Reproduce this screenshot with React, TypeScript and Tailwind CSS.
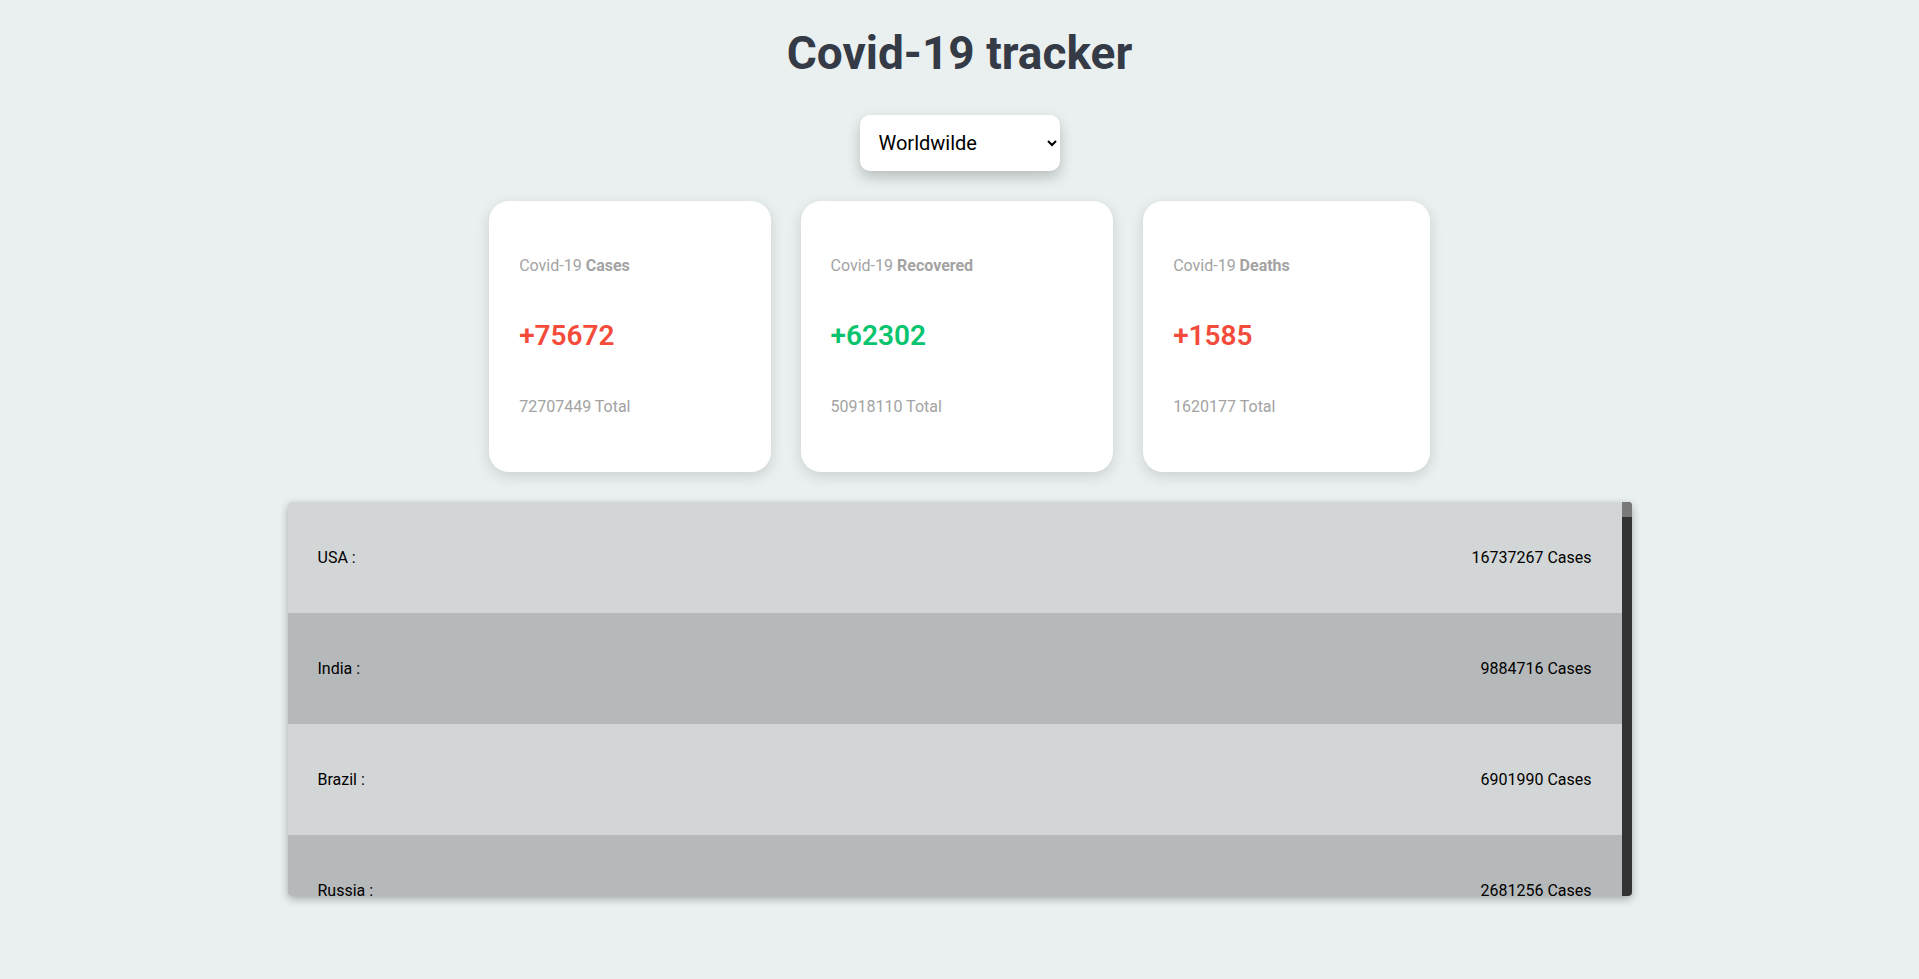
import React from 'react';

const raw = `USA,16737267
India,9884716
Brazil,6901990
Russia,2681256
France,2409062
Turkey,1928165
UK,1913277
Italy,1888144
Spain,1762212
Argentina,1510203
Colombia,1444646
Germany,1379238
Mexico,1267202
Poland,1171854
Iran,1131077
Peru,984973
Ukraine,914596
South Africa,873679
Indonesia,636154
Netherlands,628577
Belgium,612883
Czechia,597290
Iraq,580627
Chile,579939
Romania,567768
Bangladesh,496975
Canada,475214
Philippines,454447
Pakistan,449578
Morocco,405594
Switzerland,394453
Israel,362998
Portugal,362616
Saudi Arabia,360516
Sweden,357466
Austria,331857
Serbia,303444
Hungary,287013
Jordan,272926
Nepal,250180
Georgia,209417
Azerbaijan,208146
Ecuador,202356
Kazakhstan,193562
Croatia,192987
Bulgaria,190448
Panama,189503
UAE,188545
Japan,186020
Belarus,168934
Lebanon,159853
Dominican Republic,156291
Costa Rica,152513
Armenia,150218
Kuwait,148584
Bolivia,148097
Qatar,141441
Moldova,132271
Slovakia,129880
Guatemala,128429
Oman,126340
Greece,125125
Egypt,122086
Ethiopia,117242
Tunisia,117003
Honduras,115047
Denmark,114269
Myanmar,114112
Palestine,110312
Venezuela,108179
Bosnia,103716
Lithuania,103218
Paraguay,97732
Libya,96549
Slovenia,95897
Algeria,93065
Kenya,93405
Bahrain,89444
Malaysia,87913
China,86789
Kyrgyzstan,78336
Ireland,77169
Nigeria,76207
Uzbekistan,75094
North Macedonia,74490
Singapore,58341
Ghana,53270
Afghanistan,49621
Albania,48530
Montenegro,43291
El Salvador,42438
Luxembourg,42054
Norway,41924
Sri Lanka,33478`;

const countries = raw
  .split('\n')
  .map((line) => {
    const [country, cases] = line.split(',');
    return { country, cases: Number(cases) };
  })
  .sort((a, b) => b.cases - a.cases);

const stats = [
  { label: 'Cases', today: 75672, total: 72707449, color: 'text-[#f44b3b]' },
  { label: 'Recovered', today: 62302, total: 50918110, color: 'text-[#08c46e]' },
  { label: 'Deaths', today: 1585, total: 1620177, color: 'text-[#f44b3b]' },
];

const InfoBox = ({ label, today, total, color }: (typeof stats)[number]) => (
  <div className="bg-white rounded-[20px] pl-[30px] pr-[140px] pt-[53px] pb-[53px] shadow-[0_4px_14px_rgba(0,0,0,0.14)]">
    <p className="text-[16px] leading-6 text-[#a3a3a3] whitespace-nowrap">
      Covid-19 <strong className="font-bold">{label}</strong>
    </p>
    <h2 className={`mt-[41px] text-[28px] leading-[34px] font-semibold ${color}`}>+{today}</h2>
    <p className="mt-[42px] text-[16px] leading-6 text-[#a3a3a3] whitespace-nowrap">{total} Total</p>
  </div>
);

export default function App() {
  return (
    <div className="min-h-screen bg-[#eaf0f0] font-['Roboto',sans-serif] flex flex-col items-center pt-[25px] pb-[60px]">
      <h1 className="text-[46px] leading-[56px] font-bold text-[#343a46]">Covid-19 tracker</h1>

      <select
        defaultValue="worldwide"
        className="mt-[34px] w-[200px] h-[56px] pl-[15px] pr-[4px] rounded-[10px] bg-white text-[20px] text-black shadow-[0_6px_14px_rgba(0,0,0,0.22)] outline-none"
      >
        <option value="worldwide">Worldwilde</option>
        {countries.map((c) => (
          <option key={c.country} value={c.country}>
            {c.country}
          </option>
        ))}
      </select>

      <div className="mt-[30px] flex gap-[30px]">
        {stats.map((s) => (
          <InfoBox key={s.label} {...s} />
        ))}
      </div>

      <div className="mt-[30px] w-[1344px] h-[394px] flex rounded-[4px] overflow-hidden shadow-[0_3px_8px_rgba(0,0,0,0.3)]">
        <div className="flex-1 overflow-y-auto [scrollbar-width:none]">
          <table className="w-full text-[16px] text-black">
            <tbody>
              {countries.map((c) => (
                <tr key={c.country} className="h-[111px] odd:bg-[#d3d6d7] even:bg-[#b6b9ba]">
                  <td className="pl-[30px]">{c.country} :</td>
                  <td className="pr-[30px] text-right">{c.cases} Cases</td>
                </tr>
              ))}
            </tbody>
          </table>
        </div>
        {/* scrollbar */}
        <div className="w-[10px] shrink-0 bg-[#333333]">
          <div className="h-[15px] bg-[#7a7a7a]" />
        </div>
      </div>
    </div>
  );
}
